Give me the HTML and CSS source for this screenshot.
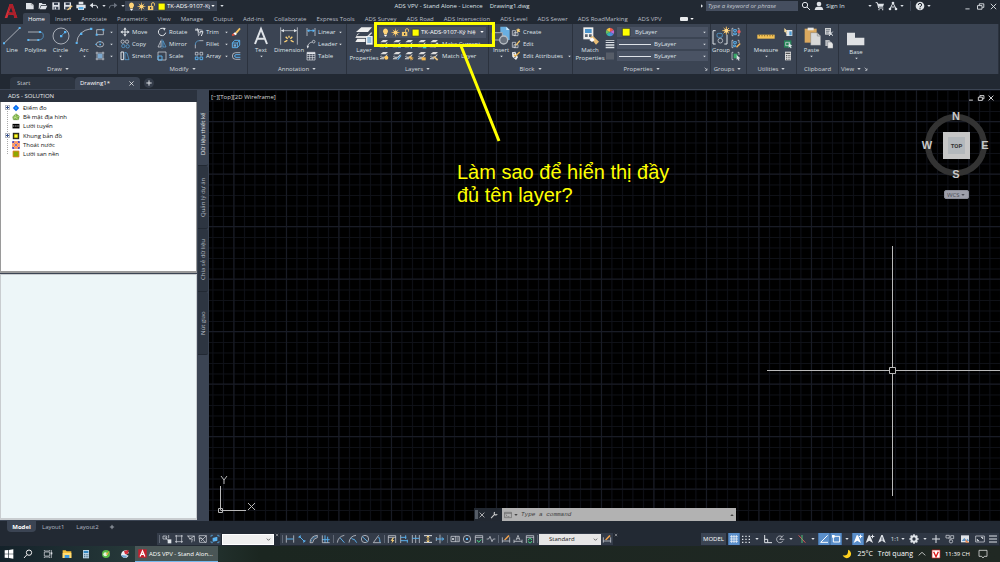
FILE: index.html
```html
<!DOCTYPE html>
<html lang="vi">
<head>
<meta charset="utf-8">
<title>ADS VPV - Stand Alone - Licence Drawing1.dwg</title>
<link rel="stylesheet" href="styles.css">
</head>
<body>
<svg class="defs" aria-hidden="true">
  <symbol id="caret" viewBox="0 0 12 12"><path class="fc" d="M1 3h10l-5 6z"/></symbol>
  <symbol id="new" viewBox="0 0 30 30"><path class="fc" d="M3 6h16l7 6v13H3z"/><path d="M19 6v6h7" fill="none" stroke="#777" stroke-width="1.5"/></symbol>
  <symbol id="open" viewBox="0 0 30 30"><path class="fc" d="M3 6h8l3 3h10v3H9L4 24H2z"/><path class="fc" d="M10 14h18l-5 11H5z"/></symbol>
  <symbol id="save" viewBox="0 0 30 30"><path class="fc" d="M4 4h22v22H4z"/><path fill="#3b4453" d="M9 5h12v7H9zM8 17h14v9H8z"/><path class="fc" d="M11 19h4v6h-4z"/></symbol>
  <symbol id="saveas" viewBox="0 0 30 30"><path class="fc" d="M3 4h21v21H3z"/><path fill="#3b4453" d="M8 5h12v7H8zM7 17h13v8H7z"/><path d="M13 25l13-12 3 3-12 11-5 1z" fill="#e8c37a"/></symbol>
  <symbol id="print" viewBox="0 0 30 30"><path class="fc" d="M8 2h14v8H8zM1 11h28v11h-5v5H6v-5H1z"/><path d="M8 18h14v7H8z" fill="#5aaee8"/></symbol>
  <symbol id="undo" viewBox="0 0 30 30"><path class="l w3" d="M8 13h11q7 0 7 9"/><path class="fc" d="M2 13l10-8v16z"/></symbol>
  <symbol id="redo" viewBox="0 0 30 30"><path class="l w3" d="M22 13H11q-7 0-7 9"/><path class="fc" d="M28 13L18 5v16z"/></symbol>
  <symbol id="bulb" viewBox="0 0 30 30"><path d="M15 2a9 9 0 0 0-5 16v4h10v-4a9 9 0 0 0-5-16z" fill="#ffd479"/><path class="fc" d="M11 23h8v3l-4 3-4-3z"/></symbol>
  <symbol id="sun" viewBox="0 0 30 30"><path d="M15 2v26M2 15h26M6 6l18 18M24 6L6 24" stroke="#f1b955" stroke-width="2.5"/><circle cx="15" cy="15" r="7" fill="#ffd479"/></symbol>
  <symbol id="lock" viewBox="0 0 30 30"><path d="M15 13V7a5 5 0 0 1 10 0v5" fill="none" stroke="#f4c869" stroke-width="3"/><path d="M3 13h18v14H3z" fill="#f4c869"/><path d="M10 17h4v6h-4z" fill="#3b4453"/></symbol>
  <symbol id="swatch" viewBox="0 0 30 30"><path d="M4 4h23v23H4z" fill="#ff0" stroke="#222933" stroke-width="2"/></symbol>
  <symbol id="line" viewBox="0 0 60 60"><path class="l" d="M6 52L53 6"/><path class="fb" d="M3 49h6v6H3zM50 3h6v6h-6z"/></symbol>
  <symbol id="polyline" viewBox="0 0 60 60"><path class="l" d="M6 18h36M8 42h28"/><path class="l b" d="M36 42q16 0 16-13T38 18"/><path class="fb" d="M4 39h6v6H4zM34 39h6v6h-6zM39 15h6v6h-6z"/></symbol>
  <symbol id="circle" viewBox="0 0 60 60"><circle class="l" cx="30" cy="30" r="24"/><path class="l b" d="M30 30L43 18"/><path class="fb" d="M27 27h7v7h-7zM39 15h7v7h-7z"/></symbol>
  <symbol id="arc" viewBox="0 0 60 60"><path class="l" d="M8 52Q10 14 52 8"/><path class="fb" d="M5 48h6v6H5zM18 20h7v7h-7zM48 5h7v7h-7z"/></symbol>
  <symbol id="rect" viewBox="0 0 30 30"><path class="l" d="M5 8h20v15H5z"/><path class="fb" d="M2 20h6v6H2zM22 5h6v6h-6z"/></symbol>
  <symbol id="ellipse" viewBox="0 0 30 30"><ellipse class="l" cx="15" cy="16" rx="11" ry="8"/><path class="fb" d="M13 14h5v5h-5zM1 14h4v4H1zM13 6h4v4h-4z"/></symbol>
  <symbol id="hatch" viewBox="0 0 30 30"><path class="l" d="M6 2v26M24 2v26M2 6h26M2 24h26"/><path d="M8 8h14v14H8z" fill="#7ba7ce"/></symbol>
  <symbol id="move" viewBox="0 0 30 30"><path class="l w3" d="M15 5v20M5 15h20"/><path class="fc" d="M15 1l5 7H10zM15 29l5-7H10zM1 15l7-5v10zM29 15l-7-5v10z"/></symbol>
  <symbol id="rotate" viewBox="0 0 30 30"><path class="l w3" d="M20 5A11 11 0 1 0 26 17"/><path class="fc" d="M17 2l9 1-4 8z"/></symbol>
  <symbol id="trim" viewBox="0 0 30 30"><path class="l" d="M4 6l22 4M10 3l4 24M22 13l-6 10"/><path class="l w3" d="M3 9h9l4 9M18 14h9l-5 13"/></symbol>
  <symbol id="erase" viewBox="0 0 30 30"><path d="M12 17L25 2l4 4-12 14z" fill="#f6c667"/><path d="M6 20l6-4 6 5-5 4z" fill="#fff"/><path d="M2 23l5-4 5 6-8 2z" fill="#e1523d"/></symbol>
  <symbol id="copy" viewBox="0 0 30 30"><circle class="l" cx="8" cy="8" r="5"/><circle class="l" cx="21" cy="8" r="5"/><circle class="l b" cx="10" cy="21" r="5"/><circle class="l b" cx="23" cy="22" r="5"/></symbol>
  <symbol id="mirror" viewBox="0 0 30 30"><path class="l" d="M12 5v19H3z"/><path class="l b" d="M18 5v19h9z"/><path class="l b" d="M15 1v28" stroke-dasharray="4 2"/></symbol>
  <symbol id="fillet" viewBox="0 0 30 30"><path class="l" d="M4 28V17M16 5h12"/><path class="l b" d="M4 18Q4 5 17 5"/></symbol>
  <symbol id="explode" viewBox="0 0 30 30"><path class="l b w3" d="M4 12l7-8h15v14l-7 8H4zM4 12h15v14M19 12l7-8"/><path d="M8 16h7v7H8z" fill="#7ba7ce"/></symbol>
  <symbol id="stretch" viewBox="0 0 30 30"><path class="l w3" d="M3 3h8v23H3z"/><path class="l b" d="M15 4v22h12L21 6z"/></symbol>
  <symbol id="scale" viewBox="0 0 30 30"><path class="l" d="M3 3h24v24H3z"/><path class="l b w3" d="M3 15h12v12H3z"/></symbol>
  <symbol id="array" viewBox="0 0 30 30"><path class="l" d="M4 4h8v8H4zM18 4h8v8h-8z"/><path class="l b w3" d="M4 18h8v8H4zM18 18h8v8h-8z"/></symbol>
  <symbol id="offset" viewBox="0 0 30 30"><path class="l" d="M28 5H14a10 10 0 0 0 0 20h14"/><path class="l b w3" d="M28 11H15a4 4 0 0 0 0 8h13"/></symbol>
  <symbol id="text" viewBox="0 0 60 60"><path fill="none" stroke="currentColor" stroke-width="6" d="M12 54L30 9l18 45M18 38h24"/></symbol>
  <symbol id="dimension" viewBox="0 0 60 60"><path class="l" d="M5 4v52M55 4v52M7 14h46"/><path class="fc" d="M6 14l9-5v10zM54 14l-9-5v10z"/><path d="M16 48l9-5M44 48l-9-5M20 32l6 6M40 32l-6 6M30 29v6" stroke="#ffd479" stroke-width="4"/></symbol>
  <symbol id="linear" viewBox="0 0 30 30"><path class="l" d="M3 3v24M27 3v24"/><path class="l b w3" d="M5 11h20"/><path class="fb" d="M3 11l7-5v10zM27 11l-7-5v10z"/></symbol>
  <symbol id="leader" viewBox="0 0 30 30"><path class="l" d="M5 26Q4 12 19 9"/><circle class="l" cx="23" cy="8" r="4"/><path class="fc" d="M2 20h7l-4 9z"/></symbol>
  <symbol id="table" viewBox="0 0 30 30"><path class="l" d="M3 4h24v23H3zM3 13h24M3 20h24M11 10v17M19 10v17"/><path class="fc" d="M3 4h24v5H3z"/></symbol>
  <symbol id="layerprops" viewBox="0 0 60 60"><path d="M22 4h32l-12 14H6z" fill="#eee"/><path d="M10 24l8-4-10 10h32l12-12 2 4-14 14H4z" fill="#ddd"/><path d="M10 38L4 48h30V38z" fill="#eee"/><path d="M36 30h20v26H36z" fill="#eceff2"/><path d="M40 36h12M40 42h12M40 48h12" stroke="#3784bd" stroke-width="3"/></symbol>
  <symbol id="stack" viewBox="0 0 30 30"><path fill="#dcdcdc" d="M12 3h15l-7 7H4zM7 13l-4 4h14l8-8v4l-7 7H7zM5 20l-3 5h13v-3H7z"/></symbol>
  <symbol id="insert" viewBox="0 0 60 60"><path d="M28 2h18l10 10v30H28z" fill="#69afe1"/><path d="M46 2v10h10" fill="#cce8fb"/><path d="M4 20h30v22H4z" fill="#4b5260" stroke="#aab0b7" stroke-width="3"/><circle cx="38" cy="42" r="12" fill="#69717d" stroke="#b5bbc2" stroke-width="4"/></symbol>
  <symbol id="create" viewBox="0 0 30 30"><path class="l" d="M4 11h10v14H4zM9 17h12v9H9z"/><path d="M21 2l2 5 5-1-3 4 3 5-6-1-4 3 1-5-4-4 5-1z" fill="#ffd479"/></symbol>
  <symbol id="edit" viewBox="0 0 30 30"><path class="l" d="M4 10h10v15H4zM9 17h12v9H9z"/><path d="M14 17L25 4l3 3-11 12-4 1z" fill="#f6c667"/></symbol>
  <symbol id="attrib" viewBox="0 0 30 30"><path fill="#eee" d="M3 4l10-2 8 17-6 8L4 17z"/><path d="M9 11l4 5L26 3" stroke="#e9b34f" stroke-width="4" fill="none"/><path d="M7 7h5M9 20l6-2" stroke="#4b5462" stroke-width="2"/></symbol>
  <symbol id="match" viewBox="0 0 60 60"><path d="M10 4h30v36H10z" fill="#eee"/><path d="M15 9h20v12H15z" fill="#4b94cc"/><path d="M15 25h8v8h-8zM27 25h8v8h-8z" fill="#596370"/><path d="M30 34l9-4 18 17-9 9z" fill="#e8bd75"/><path d="M28 42l9-8 7 8-8 6z" fill="#fff"/></symbol>
  <symbol id="wheel" viewBox="0 0 30 30"><path fill="#ef594b" d="M15 15V2a13 13 0 0 1 11 7z"/><path fill="#c069d1" d="M15 15l11-6a13 13 0 0 1 0 12z"/><path fill="#4f86db" d="M15 15l11 6a13 13 0 0 1-11 7z"/><path fill="#35b2b8" d="M15 15v13a13 13 0 0 1-11-7z"/><path fill="#68c262" d="M15 15L4 21A13 13 0 0 1 4 9z"/><path fill="#f5c344" d="M15 15L4 9a13 13 0 0 1 11-7z"/></symbol>
  <symbol id="weights" viewBox="0 0 30 30"><path class="fc" d="M2 3h26v2H2zM2 9h26v3H2zM2 16h26v4H2zM2 23h26v5H2z"/></symbol>
  <symbol id="linetype" viewBox="0 0 30 30"><path d="M3 5h24v20H3z" fill="#656c77"/><path d="M4 9h22M4 15h22M4 21h22" stroke="#252c36" stroke-width="2" stroke-dasharray="4 2"/></symbol>
  <symbol id="group" viewBox="0 0 60 60"><path class="l w3" d="M14 14H6v40h8M40 54h8V26"/><rect class="l b" x="18" y="22" width="16" height="12" rx="4"/><circle class="l" cx="28" cy="44" r="7"/><path d="M46 2v24M34 14h24M38 6l16 16M54 6L38 22" stroke="#f4bd61" stroke-width="3"/><circle cx="46" cy="14" r="6" fill="#ffd98c"/></symbol>
  <symbol id="ungroup" viewBox="0 0 30 30"><path class="l" d="M7 4H3v22h4M20 4h4v22h-4"/><path class="l b w3" d="M8 8h8v5H8zM8 18h8v5H8z"/><circle cx="24" cy="14" r="5" fill="#e25c5c"/></symbol>
  <symbol id="groupedit" viewBox="0 0 30 30"><path class="l" d="M7 4H3v22h4M20 4h4v8"/><path class="l b w3" d="M8 8h8v5H8zM8 18h6v5H8z"/><path d="M15 23L26 12l3 3-11 11z" fill="#f4b65e"/></symbol>
  <symbol id="groupsel" viewBox="0 0 30 30"><path class="l" d="M7 4H3v22h4M20 4h4v8"/><path d="M8 8h11v14H8z" fill="#3aa76a"/><path class="fc" d="M17 12l11 10-5 1 3 5-3 1-3-5-3 3z"/></symbol>
  <symbol id="measure" viewBox="0 0 60 60"><path d="M4 26h52v12H4z" fill="#f4c255"/><path d="M10 26v5M18 26v5M26 26v5M34 26v5M42 26v5M50 26v5" stroke="#8c6b28" stroke-width="3"/></symbol>
  <symbol id="quick" viewBox="0 0 30 30"><path class="fc" d="M10 9h18v18H10z"/><path d="M19 13h7v12h-7z" fill="#4c9ad2"/><path d="M4 3l9 9-4 1 3 6-3 1-2-6-3 2z" fill="#ffe2a0"/></symbol>
  <symbol id="selectall" viewBox="0 0 30 30"><path d="M3 4h22v22H3z" fill="#258558"/><path class="l" d="M8 10h12v10H8z"/><path class="fc" d="M17 12l11 9-5 1 3 5-3 1-3-5-3 3z"/></symbol>
  <symbol id="calc" viewBox="0 0 30 30"><path d="M6 2h18v26H6z" fill="#ddd"/><path d="M8 5h14v4H8zM9 12h3v3H9zM14 12h3v3h-3zM19 12h3v3h-3zM9 17h3v3H9zM14 17h3v3h-3zM19 17h3v3h-3zM9 23h3v3H9zM14 23h3v3h-3zM19 23h3v3h-3z" fill="#555"/></symbol>
  <symbol id="paste" viewBox="0 0 60 60"><path d="M8 8h36v42H8z" fill="#dba95f"/><path d="M17 5h18v8H17z" fill="#e8e8e8"/><path d="M26 20h20l10 10v28H26z" fill="#d9d9d9" stroke="#555e6b"/><path d="M46 20v10h10" fill="none" stroke="#888" stroke-width="2"/></symbol>
  <symbol id="cut" viewBox="0 0 30 30"><path d="M3 3h18v20H3z" fill="#cfd1d4"/><path d="M6 8h12M6 13h10M6 18h8" stroke="#505a67" stroke-width="2"/><path class="l w3" d="M16 16l11 10M26 14L15 27"/></symbol>
  <symbol id="docs" viewBox="0 0 30 30"><path d="M4 3h12l4 5v13H4z" fill="#b9bcc0"/><path d="M11 9h11l5 5v14H11z" fill="#e6e6e6" stroke="#4b5462"/></symbol>
  <symbol id="base" viewBox="0 0 60 60"><path d="M3 14h24v15h28v23H3z" fill="#dfe1e4"/></symbol>
  <symbol id="find" viewBox="0 0 30 30"><circle class="l w3" cx="12" cy="12" r="8"/><path class="l w3" d="M18 18l9 9"/></symbol>
  <symbol id="person" viewBox="0 0 30 30"><circle class="fc" cx="15" cy="9" r="7"/><path class="fc" d="M2 27q1-10 9-10h8q8 0 9 10z"/></symbol>
  <symbol id="cart" viewBox="0 0 30 30"><path class="l w3" d="M2 5h5l4 16h14"/><path class="fc" d="M8 8h19l-3 9H10z"/><circle class="fc" cx="12" cy="26" r="2"/><circle class="fc" cx="23" cy="26" r="2"/></symbol>
  <symbol id="apps" viewBox="0 0 30 30"><path class="l w3" d="M6 23l9-17 9 17M10 18h10"/><circle class="fc" cx="15" cy="6" r="4"/><circle class="fc" cx="6" cy="24" r="4"/><circle class="fc" cx="24" cy="24" r="4"/></symbol>
  <symbol id="help" viewBox="0 0 30 30"><circle class="fc" cx="15" cy="15" r="13"/><path d="M10 12q0-5 5-5t5 5q0 3-5 5v2M15 21v4" fill="none" stroke="#222933" stroke-width="3"/></symbol>
  <symbol id="min" viewBox="0 0 30 30"><path class="l w3" d="M8 23h14"/></symbol>
  <symbol id="restore" viewBox="0 0 30 30"><path class="l w3" d="M5 12h15v12H5zM11 11V6h15v12h-5"/></symbol>
  <symbol id="close" viewBox="0 0 30 30"><path class="l w3" d="M6 6l18 18M24 6L6 24"/></symbol>
  <symbol id="plus" viewBox="0 0 30 30"><path class="l w3" d="M15 7v16M7 15h16"/></symbol>
  <symbol id="bigplus" viewBox="0 0 30 30"><path class="l w3" d="M15 3v24M3 15h24"/></symbol>
  <symbol id="corner" viewBox="0 0 12 12"><path class="l" d="M2 2l7 7M9 4v6H3"/></symbol>
  <symbol id="chev" viewBox="0 0 12 12"><path d="M2 4l4 4 4-4" fill="none" stroke="#555" stroke-width="2"/></symbol>
  <symbol id="wrench" viewBox="0 0 30 30"><path fill="none" stroke="#ccc" stroke-width="4" d="M4 27l14-15M18 4q-5 5 0 9t9-1"/></symbol>
  <symbol id="prompt" viewBox="0 0 30 30"><path fill="none" stroke="#555" stroke-width="2" d="M2 5h26v20H2zM2 9h26M6 13l5 4-5 4M13 21h7"/></symbol>

  <symbol id="s1" viewBox="0 0 30 30"><path class="l" d="M3 6h11v9H3zM8 9l14 14M20 3v10"/><path class="fc" d="M17 16h11v12H17z"/></symbol>
  <symbol id="s2" viewBox="0 0 30 30"><path class="l" d="M7 3v24M23 3v24M3 6h24M3 23h24"/></symbol>
  <symbol id="s3" viewBox="0 0 30 30"><path class="l" d="M3 6h22v16M7 6l4 9h8l-2 10M11 15l14-9"/></symbol>
  <symbol id="s4" viewBox="0 0 30 30"><path class="l" d="M3 5h22v20H5zM7 9l16 17M25 5L9 21M3 14h10"/></symbol>
  <symbol id="s5" viewBox="0 0 30 30"><path class="l b" d="M3 9V4h6M21 4h6v5M3 21v5h6M21 26h6v-5"/><path class="fb" d="M8 12l14-4v12l-14 3z"/></symbol>
  <symbol id="d1" viewBox="0 0 30 30"><path class="l" d="M4 4v22M26 4v22"/><path class="l b w3" d="M5 15h20"/></symbol>
  <symbol id="d2" viewBox="0 0 30 30"><path class="l b w3" d="M8 8l14 14"/><path class="fb" d="M3 10l8-7v9zM27 20l-8 7v-9z"/></symbol>
  <symbol id="d3" viewBox="0 0 30 30"><path class="l" d="M3 26Q4 6 25 4v7Q12 13 11 26z"/><path class="l b" d="M7 23Q9 9 23 8"/></symbol>
  <symbol id="d4" viewBox="0 0 30 30"><path class="l b w3" d="M12 4v22M4 17h22M20 8v17"/><path class="l" d="M4 4v22h22"/></symbol>
  <symbol id="d5" viewBox="0 0 30 30"><path class="l" d="M4 26Q6 8 25 4"/><path class="l b w3" d="M12 11l13 15"/></symbol>
  <symbol id="d6" viewBox="0 0 30 30"><path class="l" d="M3 26Q5 6 24 4"/><path class="l b w3" d="M10 11l4 5h5l7 10"/></symbol>
  <symbol id="d7" viewBox="0 0 30 30"><circle class="l" cx="15" cy="15" r="11"/><path class="l b w3" d="M7 8l16 15"/></symbol>
  <symbol id="d8" viewBox="0 0 30 30"><path class="l" d="M27 26H4L20 4"/><path class="l b w3" d="M20 9q4 7 4 16"/></symbol>
  <symbol id="d9" viewBox="0 0 30 30"><path class="l" d="M4 27V5h22v22M4 10h22"/><path d="M17 11l-6 9h5l-3 9 9-11h-5l4-7z" fill="#ffd479"/></symbol>
  <symbol id="d10" viewBox="0 0 30 30"><path class="l" d="M5 3v24"/><path class="l b w3" d="M5 10h17M5 20h21M20 4v11M25 17v9"/></symbol>
  <symbol id="d11" viewBox="0 0 30 30"><path class="l" d="M4 3v24M14 3v24M25 3v24"/><path class="l b w3" d="M4 13h21"/></symbol>
  <symbol id="d12" viewBox="0 0 30 30"><path class="l w3" d="M3 5h24M3 25h24"/><path d="M15 6v18M11 10l4-4 4 4M11 20l4 4 4-4" fill="none" stroke="#ffd479" stroke-width="3"/></symbol>
  <symbol id="d13" viewBox="0 0 30 30"><path class="l" d="M15 2v26M4 9v12"/><path class="l b w3" d="M3 15h24M20 10l6 5-6 5"/></symbol>
  <symbol id="d14" viewBox="0 0 30 30"><path class="l" d="M3 7h25v16H3zM16 7v16"/><circle class="fc" cx="9" cy="15" r="3"/><path class="l" d="M19 12h7M19 18h7"/></symbol>
  <symbol id="d15" viewBox="0 0 30 30"><circle class="l" cx="15" cy="15" r="11"/><path class="fb" d="M12 12h6v6h-6z"/></symbol>
  <symbol id="d16" viewBox="0 0 30 30"><path class="l" d="M4 27V5h22v22M4 10h22"/><path d="M9 18l5 7 8-9" fill="none" stroke="#44cc7c" stroke-width="3"/></symbol>
  <symbol id="d17" viewBox="0 0 30 30"><path class="l" d="M2 15h6l4-8 6 16 4-8h6"/></symbol>
  <symbol id="d18" viewBox="0 0 30 30"><path class="l" d="M4 10v16M26 10v16M4 21h22"/><path d="M9 17L22 3l4 3-13 13z" fill="#f1a24e"/></symbol>
  <symbol id="d19" viewBox="0 0 30 30"><path class="l" d="M3 17v10M27 17v10M3 22h24M9 19l6-15 6 15M11 14h8"/></symbol>
  <symbol id="d20" viewBox="0 0 30 30"><path class="l" d="M4 27V5h22v22M4 10h22"/><path d="M10 19a5 5 0 0 1 10-1M20 21a5 5 0 0 1-10 1" fill="none" stroke="#44cc7c" stroke-width="3"/></symbol>

  <symbol id="grid" viewBox="0 0 30 30"><path class="l" d="M3 8h24M3 15h24M3 22h24M8 3v24M15 3v24M22 3v24"/></symbol>
  <symbol id="dots" viewBox="0 0 30 30"><path class="fc" d="M3 5h4v4H3zM13 5h4v4h-4zM23 5h4v4h-4zM3 14h4v4H3zM13 14h4v4h-4zM23 14h4v4h-4zM3 23h4v4H3zM13 23h4v4h-4zM23 23h4v4h-4z"/></symbol>
  <symbol id="ortho" viewBox="0 0 30 30"><path class="l w3" d="M5 3v23h22M5 16h9v9"/></symbol>
  <symbol id="polar" viewBox="0 0 30 30"><path class="l" d="M22 9a10 10 0 1 0 2 11M14 16h14M14 16L25 4"/></symbol>
  <symbol id="iso" viewBox="0 0 30 30"><path d="M5 4l20 22" stroke="#e05b5b" stroke-width="3"/><path d="M15 3v24" stroke="#4cc077" stroke-width="3"/></symbol>
  <symbol id="track" viewBox="0 0 30 30"><path class="l w3" d="M26 4L5 25h22"/></symbol>
  <symbol id="osnap" viewBox="0 0 30 30"><path class="l w3" d="M7 7h19v17H7z"/><path class="fc" d="M3 3h8v8H3z"/></symbol>
  <symbol id="anno" viewBox="0 0 30 30"><path class="fc" d="M13 3h4l9 24-11-7L3 27z"/><path d="M15 10v10" stroke="#4a5362" stroke-width="3"/></symbol>
  <symbol id="annoplus" viewBox="0 0 30 30"><path class="fc" d="M11 4h4l9 23-11-7L2 27zM21 2h3v4h4v3h-4v4h-3V9h-3V6h3z"/></symbol>
  <symbol id="gear" viewBox="0 0 30 30"><circle cx="15" cy="15" r="8" fill="none" stroke="currentColor" stroke-width="6"/><path stroke="currentColor" stroke-width="5" d="M15 1v6M15 23v6M1 15h6M23 15h6M5 5l4 4M21 21l4 4M25 5l-4 4M9 21l-4 4"/></symbol>
  <symbol id="isolate" viewBox="0 0 30 30"><path class="l" d="M3 4h10v8H3zM17 5h9v9h-9zM10 12l7 6"/><circle class="l" cx="18" cy="22" r="5"/></symbol>
  <symbol id="perf" viewBox="0 0 30 30"><path class="fc" d="M3 4h24v21H3z"/><path d="M5 21l8-9 6 6 4-4 4 7z" fill="#5a93c6"/><path d="M16 15l12 11H17z" fill="#e58a55"/></symbol>
  <symbol id="clean" viewBox="0 0 30 30"><path class="l" d="M2 6h26v18H2z"/><path class="l w3" d="M7 20v-5M7 20h5M23 10v5M23 10h-5"/></symbol>
  <symbol id="menu" viewBox="0 0 30 30"><path class="l w3" d="M3 6h24M3 15h24M3 24h24"/></symbol>
</svg>

<header class="titlebar">
  <button class="logo" aria-label="Application menu"><svg viewBox="0 0 42 48"><path d="M2 45L17 3h9l14 42h-9l-2-9H13l-3 9z" fill="#d5303a"/><path d="M17 3l-6 27 9-18 5 15-12 2-3 7 19-1 2 10h9L26 3z" fill="#ad1f2a"/><path d="M21 13l5 15H15z" fill="#222933"/></svg></button>
  <div class="qat">
    <button aria-label="New"><svg><use href="#new"/></svg></button>
    <button aria-label="Open"><svg><use href="#open"/></svg></button>
    <button aria-label="Save"><svg><use href="#save"/></svg></button>
    <button aria-label="Save as"><svg><use href="#saveas"/></svg></button>
    <button aria-label="Plot"><svg><use href="#print"/></svg></button>
    <button aria-label="Undo"><svg><use href="#undo"/></svg></button>
    <button class="narrow" aria-label="Undo list"><svg class="caret"><use href="#caret"/></svg></button>
    <button class="dim" aria-label="Redo"><svg><use href="#redo"/></svg></button>
    <button class="narrow" aria-label="Redo list"><svg class="caret"><use href="#caret"/></svg></button>
  </div>
  <div class="layerbox small">
    <svg><use href="#bulb"/></svg><svg><use href="#sun"/></svg><svg><use href="#lock"/></svg><svg><use href="#swatch"/></svg>
    <select aria-label="Layer"><option>TK-ADS-9107-Ký hiệu</option></select><svg class="caret"><use href="#caret"/></svg>
  </div>
  <button class="narrow" aria-label="Customize toolbar"><svg class="caret"><use href="#caret"/></svg></button>
  <h1 class="apptitle"><span>ADS VPV - Stand Alone - Licence</span><span>Drawing1.dwg</span></h1>
  <button class="narrow" aria-label="Expand search"><svg class="caret turn"><use href="#caret"/></svg></button>
  <input class="search" type="text" aria-label="Search" placeholder="Type a keyword or phrase">
  <div class="account">
    <button aria-label="Search"><svg><use href="#find"/></svg></button>
    <button class="signin"><svg><use href="#person"/></svg>Sign In<svg class="caret"><use href="#caret"/></svg></button>
    <button aria-label="Store"><svg><use href="#cart"/></svg></button>
    <button class="withcaret" aria-label="Apps"><svg><use href="#apps"/></svg><svg class="caret"><use href="#caret"/></svg></button>
    <button class="withcaret split" aria-label="Help"><svg><use href="#help"/></svg><svg class="caret"><use href="#caret"/></svg></button>
  </div>
  <div class="winctl">
    <button aria-label="Minimize"><svg><use href="#min"/></svg></button>
    <button aria-label="Restore"><svg><use href="#restore"/></svg></button>
    <button aria-label="Close"><svg><use href="#close"/></svg></button>
  </div>
</header>

<nav class="ribbontabs">
  <button class="active">Home</button><button>Insert</button><button>Annotate</button><button>Parametric</button><button>View</button><button>Manage</button><button>Output</button><button>Add-ins</button><button>Collaborate</button><button>Express Tools</button><button>ADS Survey</button><button>ADS Road</button><button>ADS Intersection</button><button>ADS Level</button><button>ADS Sewer</button><button>ADS RoadMarking</button><button>ADS VPV</button>
  <button class="panelbtn" aria-label="Minimize ribbon"><span class="pill"></span><svg class="caret"><use href="#caret"/></svg></button>
</nav>

<div class="ribbon">
  <section class="group g-draw">
    <div class="tools">
      <button class="big w22"><svg><use href="#line"/></svg>Line</button>
      <button class="big w25"><svg><use href="#polyline"/></svg>Polyline</button>
      <button class="big w25"><svg><use href="#circle"/></svg>Circle<svg class="caret"><use href="#caret"/></svg></button>
      <button class="big w22"><svg><use href="#arc"/></svg>Arc<svg class="caret"><use href="#caret"/></svg></button>
      <div class="col">
        <button class="tool" aria-label="Rectangle"><svg><use href="#rect"/></svg><svg class="caret"><use href="#caret"/></svg></button>
        <button class="tool" aria-label="Ellipse"><svg><use href="#ellipse"/></svg><svg class="caret"><use href="#caret"/></svg></button>
        <button class="tool" aria-label="Hatch"><svg><use href="#hatch"/></svg><svg class="caret"><use href="#caret"/></svg></button>
      </div>
    </div>
    <h2>Draw<svg class="caret"><use href="#caret"/></svg></h2>
  </section>
  <section class="group g-modify">
    <div class="tools">
      <div class="col w37">
        <button class="tool"><svg><use href="#move"/></svg>Move</button>
        <button class="tool"><svg><use href="#copy"/></svg>Copy</button>
        <button class="tool"><svg><use href="#stretch"/></svg>Stretch</button>
      </div>
      <div class="col w37">
        <button class="tool"><svg><use href="#rotate"/></svg>Rotate</button>
        <button class="tool"><svg><use href="#mirror"/></svg>Mirror</button>
        <button class="tool"><svg><use href="#scale"/></svg>Scale</button>
      </div>
      <div class="col w37 spread">
        <button class="tool"><svg><use href="#trim"/></svg>Trim<svg class="caret"><use href="#caret"/></svg></button>
        <button class="tool"><svg><use href="#fillet"/></svg>Fillet<svg class="caret"><use href="#caret"/></svg></button>
        <button class="tool"><svg><use href="#array"/></svg>Array<svg class="caret"><use href="#caret"/></svg></button>
      </div>
      <div class="col">
        <button class="tool" aria-label="Erase"><svg><use href="#erase"/></svg></button>
        <button class="tool" aria-label="Explode"><svg><use href="#explode"/></svg></button>
        <button class="tool" aria-label="Offset"><svg><use href="#offset"/></svg></button>
      </div>
    </div>
    <h2>Modify<svg class="caret"><use href="#caret"/></svg></h2>
  </section>
  <section class="group g-annotation">
    <div class="tools">
      <button class="big w22"><svg><use href="#text"/></svg>Text<svg class="caret"><use href="#caret"/></svg></button>
      <button class="big w34"><svg><use href="#dimension"/></svg>Dimension</button>
      <div class="col w37 spread">
        <button class="tool"><svg><use href="#linear"/></svg>Linear<svg class="caret"><use href="#caret"/></svg></button>
        <button class="tool"><svg><use href="#leader"/></svg>Leader<svg class="caret"><use href="#caret"/></svg></button>
        <button class="tool"><svg><use href="#table"/></svg>Table</button>
      </div>
    </div>
    <h2>Annotation<svg class="caret"><use href="#caret"/></svg></h2>
  </section>
  <section class="group g-layers">
    <div class="tools">
      <button class="big w30"><svg><use href="#layerprops"/></svg>Layer<br>Properties</button>
      <div class="col grow">
        <div class="layerbox">
          <svg><use href="#bulb"/></svg><svg><use href="#sun"/></svg><svg><use href="#lock"/></svg><svg><use href="#swatch"/></svg>
          <select aria-label="Current layer"><option>TK-ADS-9107-Ký hiệ</option></select><svg class="caret"><use href="#caret"/></svg>
        </div>
        <div class="iconrow">
          <div class="icons5">
            <button aria-label="Layer off"><svg viewBox="0 0 30 30"><use href="#stack"/><circle cx="22" cy="22" r="5" fill="#5aaee8"/></svg></button>
            <button aria-label="Isolate"><svg viewBox="0 0 30 30"><use href="#stack"/><path d="M17 18h10v8H17z" fill="#5aaee8"/></svg></button>
            <button aria-label="Freeze"><svg viewBox="0 0 30 30"><use href="#stack"/><path d="M22 16v12M16 22h12" stroke="#5fd2f0" stroke-width="4"/></svg></button>
            <button aria-label="Lock"><svg viewBox="0 0 30 30"><use href="#stack"/><path d="M17 19h11v9H17z" fill="#4ac7c9"/></svg></button>
            <button aria-label="Make current icon"><svg viewBox="0 0 30 30"><use href="#stack"/><path d="M13 18l5 7 9-13" fill="none" stroke="#e9eef4" stroke-width="3"/></svg></button>
          </div>
          <button>Make Current</button>
        </div>
        <div class="iconrow">
          <div class="icons5">
            <button aria-label="Layers on"><svg viewBox="0 0 30 30"><use href="#stack"/><circle cx="22" cy="20" r="6" fill="#ffc85e"/></svg></button>
            <button aria-label="Unisolate"><svg viewBox="0 0 30 30"><use href="#stack"/><path d="M17 26l10-13" stroke="#69b5ea" stroke-width="4"/></svg></button>
            <button aria-label="Thaw"><svg viewBox="0 0 30 30"><use href="#stack"/><path d="M21 14v14M14 21h14M16 16l10 10" stroke="#f5b950" stroke-width="3"/></svg></button>
            <button aria-label="Unlock"><svg viewBox="0 0 30 30"><use href="#stack"/><path d="M14 19h12v9H14z" fill="#f5b950"/></svg></button>
            <button aria-label="Match layer icon"><svg viewBox="0 0 30 30"><use href="#stack"/><path d="M14 17l12 10" stroke="#e9c07a" stroke-width="5"/></svg></button>
          </div>
          <button>Match Layer</button>
        </div>
      </div>
    </div>
    <h2>Layers<svg class="caret"><use href="#caret"/></svg></h2>
  </section>
  <section class="group g-block">
    <div class="tools">
      <button class="big w20"><svg><use href="#insert"/></svg>Insert<svg class="caret"><use href="#caret"/></svg></button>
      <div class="col grow">
        <button class="tool"><svg><use href="#create"/></svg>Create</button>
        <button class="tool"><svg><use href="#edit"/></svg>Edit</button>
        <button class="tool"><svg><use href="#attrib"/></svg>Edit Attributes<svg class="caret"><use href="#caret"/></svg></button>
      </div>
    </div>
    <h2>Block<svg class="caret"><use href="#caret"/></svg></h2>
  </section>
  <section class="group g-props">
    <div class="tools">
      <button class="big w30"><svg><use href="#match"/></svg>Match<br>Properties</button>
      <div class="col grow">
        <div class="prop"><svg><use href="#wheel"/></svg><div class="combo"><svg><use href="#swatch"/></svg><select aria-label="Color"><option>ByLayer</option></select><svg class="caret"><use href="#caret"/></svg></div></div>
        <div class="prop"><svg><use href="#weights"/></svg><div class="combo"><i class="rule"></i><select aria-label="Lineweight"><option>ByLayer</option></select><svg class="caret"><use href="#caret"/></svg></div></div>
        <div class="prop"><svg><use href="#linetype"/></svg><div class="combo"><i class="rule"></i><select aria-label="Linetype"><option>ByLayer</option></select><svg class="caret"><use href="#caret"/></svg></div></div>
      </div>
    </div>
    <h2>Properties<svg class="caret"><use href="#caret"/></svg><button class="launcher" aria-label="Properties palette"><svg class="caret"><use href="#corner"/></svg></button></h2>
  </section>
  <section class="group g-groups">
    <div class="tools">
      <button class="big w20"><svg><use href="#group"/></svg>Group</button>
      <div class="col">
        <button class="tool" aria-label="Ungroup"><svg><use href="#ungroup"/></svg></button>
        <button class="tool" aria-label="Group edit"><svg><use href="#groupedit"/></svg></button>
        <button class="tool" aria-label="Group selection"><svg><use href="#groupsel"/></svg></button>
      </div>
    </div>
    <h2>Groups<svg class="caret"><use href="#caret"/></svg></h2>
  </section>
  <section class="group g-util">
    <div class="tools">
      <button class="big w34"><svg><use href="#measure"/></svg>Measure<svg class="caret"><use href="#caret"/></svg></button>
      <div class="col">
        <button class="tool" aria-label="Quick select"><svg><use href="#quick"/></svg></button>
        <button class="tool" aria-label="Select all"><svg><use href="#selectall"/></svg></button>
        <button class="tool" aria-label="Calculator"><svg><use href="#calc"/></svg></button>
      </div>
    </div>
    <h2>Utilities<svg class="caret"><use href="#caret"/></svg></h2>
  </section>
  <section class="group g-clip">
    <div class="tools">
      <button class="big w25"><svg><use href="#paste"/></svg>Paste<svg class="caret"><use href="#caret"/></svg></button>
      <div class="col">
        <button class="tool" aria-label="Cut"><svg><use href="#cut"/></svg></button>
        <button class="tool" aria-label="Copy clip"><svg><use href="#docs"/></svg></button>
      </div>
    </div>
    <h2>Clipboard</h2>
  </section>
  <section class="group g-view">
    <div class="tools">
      <button class="big w30 low"><svg><use href="#base"/></svg>Base<svg class="caret"><use href="#caret"/></svg></button>
    </div>
    <h2>View<svg class="caret"><use href="#caret"/></svg><svg class="caret"><use href="#corner"/></svg></h2>
  </section>
</div>

<nav class="filetabs">
  <button class="ftab">Start</button>
  <div class="ftab active"><button>Drawing1*</button><button aria-label="Close drawing"><svg><use href="#close"/></svg></button></div>
  <button class="add" aria-label="New drawing"><svg><use href="#plus"/></svg></button>
</nav>

<main class="work">
  <aside class="palette">
    <h2>ADS - SOLUTION</h2>
    <div class="treebox">
      <ul class="tree">
        <li><button class="exp" aria-label="Expand"></button><svg viewBox="0 0 30 30"><path d="M15 3l12 12-12 12L3 15z" fill="#0a62ee"/><path d="M15 10l5 5-5 5-5-5z" fill="#20b4ff"/></svg>Điểm đo</li>
        <li><svg viewBox="0 0 30 30"><path d="M15 3l12 9-3 13H5L3 14z" fill="#7cb342" stroke="#4b8024" stroke-width="2"/><path d="M15 3l-4 13 13 9M3 14l9 3 15-5M11 16L5 25" stroke="#d6ecae" stroke-width="2" fill="none"/></svg>Bề mặt địa hình</li>
        <li><svg viewBox="0 0 30 30"><path d="M2 7h26v17H2z"/><path d="M4 15h22" stroke="#fff" stroke-width="3" stroke-dasharray="5 3"/></svg>Lưới tuyến</li>
        <li><button class="exp" aria-label="Expand"></button><svg viewBox="0 0 30 30"><path d="M3 3h24v24H3z" fill="#222"/><path d="M7 7h16v16H7z" fill="#9a9200"/><circle cx="15" cy="15" r="6" fill="#ff3"/></svg>Khung bản đồ</li>
        <li><svg viewBox="0 0 30 30"><path d="M3 3h24v24H3z" fill="#ffd6b0" stroke="#fa5a1e" stroke-width="3"/><circle cx="15" cy="15" r="8" fill="none" stroke="#fa5a1e" stroke-width="3"/><path d="M1 1h7v6H1zM22 1h7v6h-7zM1 23h7v6H1zM22 23h7v6h-7zM12 12h6v6h-6z" fill="#1c32d8"/></svg>Thoát nước</li>
        <li><svg viewBox="0 0 30 30"><path d="M4 4h22v22H4z" fill="#8fa800" stroke="#e37820" stroke-width="3"/></svg>Lưới san nền</li>
      </ul>
    </div>
    <div class="infobox"></div>
  </aside>
  <nav class="sidetabs">
    <button class="active">Dữ liệu thiết kế</button><button>Quản lý dự án</button><button>Chia sẻ dữ liệu</button><button>Nút giao</button>
  </nav>
  <section class="canvas">
    <svg class="gridlines" aria-hidden="true">
      <defs>
        <pattern id="minor" x="3.4" y="10.5" width="10.5" height="10.5" patternUnits="userSpaceOnUse"><path d="M.5 0v10.5M0 .5h10.5" stroke="#0f1118" fill="none"/></pattern>
        <pattern id="major" x="24.4" y="31" width="52.5" height="52.5" patternUnits="userSpaceOnUse"><path d="M.5 0v52.5M0 .5h52.5" stroke="#191c26" fill="none"/></pattern>
      </defs>
      <rect width="100%" height="100%" fill="url(#minor)"/><rect width="100%" height="100%" fill="url(#major)"/>
      <g stroke="#b9b9b9" fill="none">
        <path d="M683.500 156V406M558 280.500H1600"/><path d="M680.500 277.500h6v6h-6z" fill="#000"/>
        <path d="M11.500 396V420M11.500 420.500H37M9.500 418.500h4v4h-4zM12 386l3 4 3-4M15 390v4M39 413l7 7M46 413l-7 7"/>
      </g>
    </svg>
    <span class="viewlabel">[−][Top][2D Wireframe]</span>
    <div class="viewctl"><button aria-label="Minimize view"><svg><use href="#min"/></svg></button><button aria-label="Restore view"><svg><use href="#restore"/></svg></button><button aria-label="Close view"><svg><use href="#close"/></svg></button></div>
    <div class="cube">
      <div class="ring"></div>
      <button class="face">TOP</button>
      <span class="n">N</span><span class="e">E</span><span class="s">S</span><span class="w">W</span>
    </div>
    <button class="wcs">WCS<svg class="caret"><use href="#caret"/></svg></button>
    <p class="question">Làm sao để hiển thị đầy<br>đủ tên layer?</p>
    <div class="cmd">
      <div class="cmdgrip"><i></i><button aria-label="Close command line"><svg><use href="#close"/></svg></button><button aria-label="Customize"><svg><use href="#wrench"/></svg></button></div>
      <div class="cmdline"><svg><use href="#prompt"/></svg><svg class="caret"><use href="#caret"/></svg><input type="text" aria-label="Command" placeholder="Type a command"><svg class="caret up"><use href="#caret"/></svg></div>
    </div>
  </section>
</main>

<nav class="layouttabs">
  <button class="active">Model</button><button>Layout1</button><button>Layout2</button><button class="plus" aria-label="New layout"><svg><use href="#plus"/></svg></button>
</nav>

<div class="status">
  <div class="bar">
    <i></i><button aria-label="Align 1"><svg><use href="#s1"/></svg></button><button aria-label="Viewports"><svg><use href="#s2"/></svg></button><button aria-label="Polygonal"><svg><use href="#s3"/></svg></button><button aria-label="Clip"><svg><use href="#s4"/></svg></button><button aria-label="Scale viewport"><svg><use href="#s5"/></svg></button>
  </div>
  <div class="stylebox scale"><select aria-label="Viewport scale"><option></option></select><svg><use href="#chev"/></svg></div>
  <button class="tiny" aria-label="Close toolbar"><svg><use href="#close"/></svg></button>
  <div class="bar dims">
    <i></i><button aria-label="Linear"><svg><use href="#d1"/></svg></button><button aria-label="Aligned"><svg><use href="#d2"/></svg></button><button aria-label="Arc length"><svg><use href="#d3"/></svg></button><button aria-label="Ordinate"><svg><use href="#d4"/></svg></button>
    <i></i><button aria-label="Radius"><svg><use href="#d5"/></svg></button><button aria-label="Jogged"><svg><use href="#d6"/></svg></button><button aria-label="Diameter"><svg><use href="#d7"/></svg></button><button aria-label="Angular"><svg><use href="#d8"/></svg></button>
    <i></i><button aria-label="Quick dimension"><svg><use href="#d9"/></svg></button><button aria-label="Baseline"><svg><use href="#d10"/></svg></button><button aria-label="Continue"><svg><use href="#d11"/></svg></button><button aria-label="Dimension space"><svg><use href="#d12"/></svg></button><button aria-label="Dimension break"><svg><use href="#d13"/></svg></button>
    <i></i><button aria-label="Tolerance"><svg><use href="#d14"/></svg></button><button aria-label="Center mark"><svg><use href="#d15"/></svg></button><button aria-label="Inspection"><svg><use href="#d16"/></svg></button><button aria-label="Jogged linear"><svg><use href="#d17"/></svg></button>
    <i></i><button aria-label="Dimension edit"><svg><use href="#d18"/></svg></button><button aria-label="Text edit"><svg><use href="#d19"/></svg></button><button aria-label="Update"><svg><use href="#d20"/></svg></button>
    <i></i><div class="stylebox"><select aria-label="Dimension style"><option>Standard</option></select><svg><use href="#chev"/></svg></div>
    <button aria-label="Dimension style manager"><svg><use href="#d18"/></svg></button>
  </div>
  <button class="tiny" aria-label="Close toolbar"><svg><use href="#close"/></svg></button>
  <div class="modes">
    <button class="model">MODEL</button>
    <button class="on" aria-label="Grid"><svg><use href="#grid"/></svg></button>
    <button aria-label="Snap"><svg><use href="#dots"/></svg></button>
    <button class="narrow" aria-label="Snap options"><svg class="caret"><use href="#caret"/></svg></button>
    <button aria-label="Ortho"><svg><use href="#ortho"/></svg></button>
    <button aria-label="Polar"><svg><use href="#polar"/></svg></button>
    <button class="narrow" aria-label="Polar options"><svg class="caret"><use href="#caret"/></svg></button>
    <button aria-label="Isodraft"><svg><use href="#iso"/></svg></button>
    <button class="narrow" aria-label="Isodraft options"><svg class="caret"><use href="#caret"/></svg></button>
    <button class="on" aria-label="Object tracking"><svg><use href="#track"/></svg></button>
    <button class="on" aria-label="Object snap"><svg><use href="#osnap"/></svg></button>
    <button class="narrow" aria-label="Snap modes"><svg class="caret"><use href="#caret"/></svg></button>
    <button class="on" aria-label="Annotation visibility"><svg><use href="#annoplus"/></svg></button>
    <button aria-label="Auto scale"><svg><use href="#annoplus"/></svg></button>
    <button aria-label="Annotation scale"><svg><use href="#anno"/></svg></button>
    <button class="ratio">1:1<svg class="caret"><use href="#caret"/></svg></button>
    <button aria-label="Workspace"><svg><use href="#gear"/></svg></button>
    <button class="narrow" aria-label="Workspace options"><svg class="caret"><use href="#caret"/></svg></button>
    <button aria-label="Annotation monitor"><svg><use href="#bigplus"/></svg></button>
    <button class="wide" aria-label="Isolate objects"><svg><use href="#isolate"/></svg></button>
    <button class="wide" aria-label="Graphics performance"><svg><use href="#perf"/></svg></button>
    <button class="wide" aria-label="Clean screen"><svg><use href="#clean"/></svg></button>
    <button aria-label="Customization"><svg><use href="#menu"/></svg></button>
  </div>
</div>

<footer class="taskbar">
  <div class="pins">
    <button aria-label="Start"><svg viewBox="0 0 30 30"><path fill="#fff" d="M2 4l11-1v11H2zM15 3l13-2v13H15zM2 16h11v11L2 26zM15 16h13v13l-13-2z"/></svg></button>
    <button aria-label="Search"><svg viewBox="0 0 30 30"><circle cx="18" cy="11" r="8" fill="none" stroke="#eee" stroke-width="3"/><path d="M12 17L3 27" stroke="#eee" stroke-width="3"/></svg></button>
    <button aria-label="Task view"><svg viewBox="0 0 30 30"><path class="l" d="M4 9h16v12H4zM4 3v3h16V3M4 27v-3h16v3M25 3v24"/><path class="fc" d="M23 10h5v6h-5z"/></svg></button>
    <button aria-label="Explorer"><svg viewBox="0 0 30 30"><path d="M2 4h9l3 3h14v20H2z" fill="#f5bf3b"/><path d="M2 12h26v15H2z" fill="#ffdc73"/><path d="M8 18h14v9H8z" fill="#3f9be0"/></svg></button>
    <button aria-label="Calculator"><svg viewBox="0 0 30 30"><path d="M6 3h18v25H6z" fill="#b9d3e5"/><path d="M8 6h14v6H8z" fill="#3286c0"/><path d="M9 16h3v3H9zM14 16h3v3h-3zM19 16h3v3h-3zM9 22h3v3H9zM14 22h3v3h-3zM19 22h3v3h-3z" fill="#3b607b"/></svg></button>
    <button aria-label="Browser"><svg viewBox="0 0 30 30"><circle cx="15" cy="15" r="12" fill="#57b947"/><circle cx="13" cy="16" r="6" fill="#e6f6df"/><path d="M14 15L26 5l-7 14z" fill="#e9a93a"/></svg></button>
    <button aria-label="Assistant"><svg viewBox="0 0 30 30"><path d="M3 17Q5 4 20 4l7 8-9 5 8 3-6 6Q6 28 3 17z" fill="#ecf0f4"/><path d="M12 6l14-3-2 11-9 2z" fill="#d6303d"/><path d="M4 18l18 2-5 6Q6 27 4 18z" fill="#6fa7d4"/></svg></button>
  </div>
  <button class="running"><svg viewBox="0 0 30 30"><path d="M1 1h28v28H1z" fill="#c6202e"/><path d="M7 25l8-19 8 19M10 18h10" fill="none" stroke="#fff" stroke-width="4"/></svg>ADS VPV - Stand Alon...</button>
  <div class="tray">
    <button class="weather"><svg viewBox="0 0 30 30"><path d="M18 2a13 13 0 1 1-16 17Q20 22 18 2z" fill="#ffd21f"/></svg><span>25°C</span><span>Trời quang</span></button>
    <button aria-label="Hidden icons"><svg viewBox="0 0 30 30"><path class="l" d="M5 19l10-9 10 9"/></svg></button>
    <button aria-label="Keyboard"><svg viewBox="0 0 30 30"><path d="M3 3h24v24H3z" fill="#fff" stroke="#c22" stroke-width="2"/><path d="M8 8l7 15 7-15" fill="none" stroke="#d11" stroke-width="4"/></svg></button>
    <time>11:39 CH</time>
    <button aria-label="Notifications"><svg viewBox="0 0 30 30"><path class="l" d="M3 4h24v18h-8l-4 5-4-5H3z"/></svg></button>
  </div>
</footer>

<svg class="callout" aria-hidden="true"><path d="M375.500 23.500H493.500V45.500H375.500zM461 46L499 141" fill="none" stroke="#ff0" stroke-width="3"/></svg>
</body>
</html>
```

FILE: styles.css
```css
* { box-sizing: border-box; }
html, body { margin: 0; }
body {
  position: relative;
  display: flex;
  flex-direction: column;
  min-height: 100vh;
  overflow: hidden;
  background: #222933;
  color: #dfe3e8;
  font: 6px/8px "Open Sans", "Noto Sans", sans-serif;
}
.defs { position: absolute; width: 0; height: 0; }
button, select, input {
  margin: 0;
  padding: 0;
  border: 0;
  background: none;
  color: inherit;
  font: inherit;
  white-space: nowrap;
}
select { appearance: none; min-width: 0; outline: none; }
h1, h2, p, ul { margin: 0; padding: 0; font: inherit; }
ul { list-style: none; }
svg { display: block; flex: none; width: 10px; height: 10px; }
svg.caret { width: 4px; height: 4px; }
.turn { transform: rotate(-90deg); }
.up { transform: rotate(180deg); }
.l { fill: none; stroke: currentColor; stroke-width: 2; }
.w3 { stroke-width: 3; }
.b { stroke: #5aaee8; }
.fc { fill: currentColor; }
.fb { fill: #5ab4f2; }

/* title bar */
.titlebar { display: flex; align-items: center; height: 12px; padding-right: 2px; }
.logo { align-self: flex-start; width: 25px; height: 12px; padding: 3px 4px; overflow: visible; z-index: 1; }
.logo svg { width: 14px; height: 16px; }
.qat { display: flex; align-items: center; width: 100px; justify-content: space-between; }
.dim { color: #6c7480; }
.layerbox { display: flex; align-items: center; gap: 1px; height: 11px; padding: 0 2px; background: #4a5364; color: #fff; }
.layerbox svg { width: 9px; height: 9px; }
.layerbox svg.caret { width: 4px; height: 4px; }
.layerbox select { flex: 1; overflow: hidden; }
.layerbox.small { width: 92px; height: 10px; margin-right: 3px; background: #3b4453; }
.apptitle { flex: 1; display: flex; justify-content: center; gap: 7px; }
.search { width: 92px; height: 10px; margin: 0 3px 0 2px; padding: 0 2px; background: #454e5f; font-style: italic; }
.search::placeholder { color: #c3c8cf; opacity: 1; }
.account { display: flex; align-items: center; gap: 3px; }
.signin, .withcaret { display: flex; align-items: center; gap: 2px; }
.signin { width: 58px; }
.signin .caret { margin-left: auto; }
.split { margin-left: 3px; padding-left: 4px; border-left: 1px solid #3b4453; }
.winctl { display: flex; gap: 4px; margin-left: 32px; }
.winctl svg { width: 9px; height: 9px; }

/* ribbon tabs */
.ribbontabs { display: flex; height: 11px; padding-left: 23px; margin-top: 1px; align-items: stretch; color: #b9bec6; }
.ribbontabs button { padding: 0 5px; }
.ribbontabs .active { background: #3b4453; color: #fff; border-radius: 2px 2px 0 0; }
.ribbontabs .panelbtn { display: flex; align-items: center; gap: 2px; margin-left: 8px; color: #fff; }
.pill { width: 8px; height: 4px; background: #e8eaec; border-radius: 1px; }

/* ribbon */
.ribbon { display: flex; height: 50px; padding: 0 1px; }
.group { display: flex; flex-direction: column; flex: none; padding: 2px 2px 0; background: #3b4453; border-right: 1px solid #2b323e; }
.g-draw { width: 117px; padding-left: 0; }
.g-modify { width: 130px; }
.g-annotation { width: 99px; }
.g-layers { width: 142px; }
.g-block { width: 84px; }
.g-props { width: 138px; }
.g-groups { width: 36px; padding-left: 0; }
.g-util { width: 50px; }
.g-clip { width: 42px; }
.g-view { flex: 1; }
.tools { display: flex; height: 38px; }
.group h2 { display: flex; align-items: center; justify-content: center; gap: 3px; height: 10px; color: #d3d7dc; position: relative; }
.g-view h2 { justify-content: flex-start; }
.launcher { position: absolute; right: 0; top: 3px; }
.big { display: flex; flex-direction: column; align-items: center; flex: none; text-align: center; }
.big svg { width: 20px; height: 20px; }
.big svg.caret { width: 3px; height: 3px; margin-top: 1px; }
.low { padding-top: 2px; }
.w20 { width: 20px; }
.w22 { width: 22px; }
.w25 { width: 25px; }
.w30 { width: 30px; }
.w34 { width: 34px; }
.w37 { width: 37px; }
.col { display: grid; grid-template-rows: repeat(3, 12px); align-items: center; justify-items: start; }
.tool { display: flex; align-items: center; gap: 2px; }
.tool .caret, .combo .caret { width: 3px; height: 3px; margin-left: 3px; }
.spread { justify-items: stretch; }
.spread .caret { margin-left: auto; margin-right: 3px; }
.grow { flex: 1; justify-items: stretch; }
.iconrow { display: flex; align-items: center; gap: 3px; }
.icons5 { display: flex; justify-content: space-between; width: 60px; }
.prop, .combo { display: flex; align-items: center; }
.prop { gap: 2px; }
.combo { flex: 1; height: 10px; padding: 0 2px; gap: 3px; background: #4a5364; }
.combo svg:first-child { width: 12px; height: 10px; margin-left: 1px; }
.combo select { flex: 1; }
.rule { width: 32px; height: 1px; background: #dfe3e8; }

/* drawing file tabs */
.filetabs { display: flex; align-items: stretch; height: 12px; margin-top: 3px; padding-left: 10px; }
.ftab { display: flex; align-items: center; width: 65px; padding: 0 7px; background: #2d3541; border-radius: 4px 4px 0 0; color: #c2c7ce; }
.ftab.active { justify-content: space-between; background: #3b4453; color: #fff; padding: 0 5px; }
.ftab svg { width: 7px; height: 7px; }
.add { align-self: center; margin-left: 4px; border-radius: 5px; background: #343c49; }

/* work area */
.work { display: flex; flex: 1; background: #3b4453; padding-top: 1px; }
.palette { display: flex; flex-direction: column; width: 197px; padding-bottom: 1px; }
.palette h2 { height: 12px; padding: 1px 8px; line-height: 10px; background: #2b323e; color: #e8eaed; }
.treebox { height: 171px; padding: 1px 4px; background: #fff; border: solid #9a9a9a; border-width: 0 1px 2px; color: #111; }
.infobox { flex: 1; margin-top: 1px; background: #edf6f8; border: 1px solid #c9cdd0; border-width: 1px 1px 2px; }
.tree { position: relative; display: grid; grid-auto-rows: 1fr; height: 56px; }
.tree::before { content: ""; position: absolute; left: 2px; top: 5px; bottom: 5px; border-left: 1px dotted #aaa; }
.tree li { position: relative; display: flex; align-items: center; gap: 3px; padding-left: 7px; }
.tree li svg { width: 8px; height: 8px; }
.exp {
  position: absolute; left: 0; top: 2px; width: 5px; height: 5px;
  border: 1px solid #b4b8c0;
  background:
    linear-gradient(#35508c, #35508c) center / 3px 1px no-repeat,
    #fff linear-gradient(#35508c, #35508c) center / 1px 3px no-repeat;
}
.sidetabs { display: flex; flex-direction: column; width: 12px; padding: 13px 1px 0; }
.sidetabs button { height: 63px; writing-mode: vertical-rl; transform: rotate(180deg); background: #2d3541; color: #b4bac3; border-top: 1px solid #222933; border-radius: 2px 0 0 2px; text-align: center; }
.sidetabs .active { background: #3b4453; color: #e6e9ec; }

/* model space */
.canvas { position: relative; flex: 1; background: #000; overflow: hidden; }
.gridlines { position: absolute; inset: 0; width: 100%; height: 100%; }
.viewlabel { position: absolute; left: 2px; top: 3px; color: #d8d8d8; }
.viewctl { position: absolute; right: 5px; top: 4px; display: flex; gap: 2px; color: #fff; }
.viewctl svg { width: 8px; height: 8px; }
.cube { position: absolute; right: 10px; top: 21px; width: 68px; height: 68px; font: bold 11px/12px "Liberation Sans", sans-serif; color: #c9c9c9; }
.ring { position: absolute; inset: 3px; border: 6px solid #333; border-radius: 50%; }
.face { position: absolute; left: 21px; top: 21px; width: 27px; height: 27px; background: #b3b8bc; border: 5px solid #c6c6c6; color: #333; font: bold 6px/8px Roboto, sans-serif; text-align: center; }
.cube span { position: absolute; width: 12px; text-align: center; }
.n { left: 28px; top: -1px; }
.s { left: 28px; bottom: -1px; }
.w { left: -1px; top: 28px; }
.e { right: -1px; top: 28px; }
.wcs { position: absolute; right: 31px; top: 100px; display: flex; align-items: center; justify-content: space-between; width: 25px; height: 9px; padding: 0 3px 0 2px; border: 1px solid #8b8d98; border-radius: 2px; background: #9ea0ab; color: #4c4e57; }
.question { position: absolute; left: 248px; top: 71px; color: #ff0; font: 20px/23px "Liberation Sans", Arial, sans-serif; }
.cmd { position: absolute; left: 265px; right: 264px; bottom: 0; display: flex; height: 13px; }
.cmdgrip { display: flex; align-items: center; width: 28px; padding-left: 1px; background: #222831; color: #ccc; }
.cmdgrip i { width: 3px; height: 9px; background: #555c66; }
.cmdgrip svg { width: 8px; height: 8px; }
.cmdgrip button + button { margin-left: 4px; }
.cmdline { display: flex; flex: 1; align-items: center; gap: 2px; padding: 0 2px; background: #b2b2b2; color: #444; }
.cmdline svg:first-child { width: 8px; height: 8px; }
.cmdline input { flex: 1; min-width: 0; padding-left: 1px; font: italic 6px/8px "Liberation Mono", monospace; }
.cmdline input::placeholder { color: #3e3e3e; opacity: 1; }

/* layout tabs */
.layouttabs { display: flex; height: 11px; padding-left: 7px; color: #b4bac3; }
.layouttabs button { padding: 0 6px; min-width: 34px; }
.layouttabs .active { min-width: 29px; padding: 0 5px; background: #3b4453; color: #fff; font-weight: bold; border-radius: 0 0 4px 4px; }
.layouttabs .plus { display: grid; place-items: center; min-width: 10px; padding: 0 3px; }
.layouttabs svg { width: 8px; height: 8px; }

/* status row */
.status { display: flex; align-items: center; height: 14px; padding: 0 1px 0 157px; }
.bar { display: flex; align-items: center; height: 12px; background: #343c49; }
.bar i { width: 1px; height: 8px; margin: 0 1px; background: #606875; }
.bar button { display: grid; place-items: center; width: 12px; height: 12px; }
.bar > i:first-child { margin-left: 2px; }
.tiny { align-self: flex-start; margin: 1px 1px 0; color: #fff; }
.tiny svg { width: 4px; height: 4px; }
.stylebox { display: flex; align-items: center; width: 62px; height: 11px; padding: 0 3px 0 10px; background: #e6e6e6; color: #222; }
.stylebox.scale { width: 52px; margin-left: 1px; padding: 0 2px; background: #efefef; border: 1px solid #fff; }
.stylebox select { flex: 1; }
.stylebox svg { width: 5px; height: 5px; }
.modes { display: flex; align-items: center; margin-left: auto; }
.modes button { display: flex; align-items: center; justify-content: center; width: 12px; height: 12px; background: #2f3744; }
.modes .model { width: 25px; margin-right: 2px; background: #3b4453; color: #fff; }
.modes .on { width: 12px; background: #5b8fca; color: #fff; border: solid #4775a9; border-width: 0 1px; }
.modes .narrow { width: 10px; }
.modes .ratio { width: 20px; gap: 2px; }
.modes .wide { width: 15px; }
.narrow { display: grid; place-items: center; }

/* task bar */
.taskbar { display: flex; align-items: stretch; height: 16px; padding: 0 12px 0 4px; background: linear-gradient(90deg, #14222a, #2a3d3c 16%, #1b2620 26%, #202823); }
.pins { display: flex; align-items: center; justify-content: space-between; width: 126px; }
.running { display: flex; align-items: center; gap: 2px; width: 83px; margin-left: 5px; padding: 0 3px; background: #4a5656; border-bottom: 1px solid #76b9ed; color: #fff; }
.running svg { width: 9px; height: 9px; }
.tray { display: flex; align-items: center; gap: 4px; margin-left: auto; color: #fff; }
.tray time { margin-right: 4px; }
.weather { display: flex; align-items: center; gap: 5px; font-size: 7px; }

/* highlight over the layer list */
.callout { position: absolute; left: 0; top: 0; width: 502px; height: 144px; pointer-events: none; z-index: 2; }
```
